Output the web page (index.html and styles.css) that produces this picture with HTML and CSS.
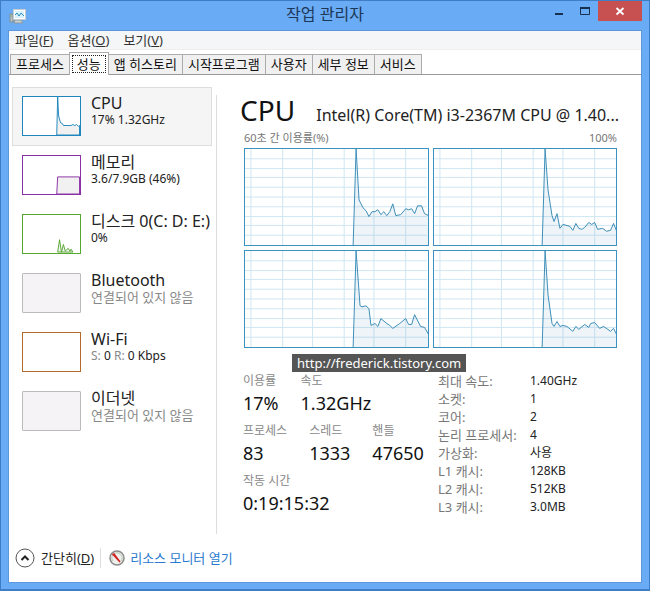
FILE: index.html
```
<!DOCTYPE html>
<html lang="ko">
<head>
  <meta charset="UTF-8">
  <meta name="viewport" content="width=device-width, initial-scale=1.0">
  <title>작업 관리자</title>
  <link rel="stylesheet" href="styles.css">
</head>
<body>
  <!-- 그래프 눈금 -->
  <svg class="defs" aria-hidden="true">
    <symbol id="grid" viewBox="0 0 184 98" preserveAspectRatio="none">
      <path class="grid-line" d="M0 10H184M0 20H184M0 29H184M0 39H184M0 49H184M0 59H184M0 69H184M0 78H184M0 88H184M6 0V98M38 0V98M68 0V98M100 0V98M130 0V98M162 0V98"/>
    </symbol>
  </svg>

  <div class="window">
    <header class="titlebar">
      <svg class="app-icon" viewBox="0 0 18 16" aria-hidden="true">
        <path d="M1 6h3v8H1z" fill="#b9c3c4" stroke="#7f8f98"/>
        <path d="M6 12h6l2 3H5z" fill="#c7d0d3" stroke="#8b999f"/>
        <rect x="4.500" y="1.500" width="12" height="10" fill="#fff" stroke="#c4ccd0"/>
        <rect x="6" y="3" width="9" height="7" fill="#d9f1fa"/>
        <path d="M6 7l2-2 2 3 2-3 3 3" fill="none" stroke="#2b8cb8"/>
        <path d="M2 8h1" stroke="#6cb33f"/>
      </svg>
      <h1>작업 관리자</h1>
      <div class="controls">
        <button class="control" aria-label="최소화"><svg viewBox="0 0 10 10"><path d="M1 8h8" stroke="#16304f" stroke-width="2"/></svg></button>
        <button class="control" aria-label="최대화"><svg viewBox="0 0 10 10"><path d="M.5 1.500h9v7h-9z" fill="none" stroke="#16304f"/><path d="M0 2h10" stroke="#16304f" stroke-width="2"/></svg></button>
        <button class="control close" aria-label="닫기"><svg viewBox="0 0 10 10"><path d="M1.500 2l7 6.500M8.500 2l-7 6.500" stroke="#fff" stroke-width="1.800"/></svg></button>
      </div>
    </header>

    <div class="client">
      <nav class="menu">
        <button>파일(<u>F</u>)</button>
        <button>옵션(<u>O</u>)</button>
        <button>보기(<u>V</u>)</button>
      </nav>
      <div class="tabs" role="tablist">
        <button class="tab" role="tab">프로세스</button>
        <button class="tab active" role="tab" aria-selected="true"><span>성능</span></button>
        <button class="tab" role="tab">앱 히스토리</button>
        <button class="tab" role="tab">시작프로그램</button>
        <button class="tab" role="tab">사용자</button>
        <button class="tab" role="tab">세부 정보</button>
        <button class="tab" role="tab">서비스</button>
      </div>

      <div class="content">
        <aside>
          <button class="item active">
            <svg class="thumb cpu" viewBox="0 0 59 40"><path d="M35 40L36 0L37 20L39 27L41 28L42 30H50L52 29L54 30L56 29L58 31L59 30V40z"/></svg>
            <span class="item-text"><span class="item-name">CPU</span><span class="item-value">17% 1.32GHz</span></span>
          </button>
          <button class="item">
            <svg class="thumb memory" viewBox="0 0 59 40"><path d="M35 40L36 22H59V40z"/></svg>
            <span class="item-text"><span class="item-name">메모리</span><span class="item-value">3.6/7.9GB (46%)</span></span>
          </button>
          <button class="item">
            <svg class="thumb disk" viewBox="0 0 59 40"><path d="M36 39L38 26L40 39L42 31L44 38L47 35L49 38L50 36L52 39H36z"/></svg>
            <span class="item-text"><span class="item-name">디스크 0(C: D: E:)</span><span class="item-value">0%</span></span>
          </button>
          <button class="item">
            <span class="thumb off"></span>
            <span class="item-text"><span class="item-name">Bluetooth</span><span class="item-value offline">연결되어 있지 않음</span></span>
          </button>
          <button class="item">
            <span class="thumb wifi"></span>
            <span class="item-text"><span class="item-name">Wi-Fi</span><span class="item-value"><span class="muted">S:</span> 0 <span class="muted">R:</span> 0 Kbps</span></span>
          </button>
          <button class="item">
            <span class="thumb off"></span>
            <span class="item-text"><span class="item-name">이더넷</span><span class="item-value offline">연결되어 있지 않음</span></span>
          </button>
        </aside>

        <main>
          <div class="heading">
            <h2>CPU</h2>
            <p>Intel(R) Core(TM) i3-2367M CPU @ 1.40...</p>
          </div>
          <div class="scale"><span>60초 간 이용률(%)</span><span>100%</span></div>
          <div class="graphs">
            <svg class="graph" viewBox="0 0 184 98" preserveAspectRatio="none">
              <use href="#grid"/>
              <path class="line" d="M109 99L112 0L115 52L119 60L122 63L125 69L128 64H131L134 62L137 67L140 64L143 68L146 64L149 56L152 68L157 67L162 61L165 62L168 61L171 66L174 58H178L181 66L185 68V99z"/>
            </svg>
            <svg class="graph" viewBox="0 0 184 98" preserveAspectRatio="none">
              <use href="#grid"/>
              <path class="line" d="M109 99L112 0L115 42L119 68L121 74L124 66L127 81L130 77L137 79L140 83L143 76L146 81L149 82L152 80L156 75L159 77L162 75L165 82L170 81L174 84L178 83L181 76L185 86V99z"/>
            </svg>
            <svg class="graph" viewBox="0 0 184 98" preserveAspectRatio="none">
              <use href="#grid"/>
              <path class="line" d="M109 99L112 0L116 56L118 57L122 56L125 59L127 76L131 74L134 77L137 69L143 74L146 76L149 79L156 74L162 69L165 75H168L171 65L177 77L181 78L185 85V99z"/>
            </svg>
            <svg class="graph" viewBox="0 0 184 98" preserveAspectRatio="none">
              <use href="#grid"/>
              <path class="line" d="M109 99L112 0L115 45L119 74L121 77L124 72L127 77L130 76L134 77L140 82L143 77L146 80L152 75L156 78L158 74L162 73L167 79L171 77L178 82L181 79L185 87V99z"/>
            </svg>
            <span class="watermark">http://frederick.tistory.com</span>
          </div>

          <div class="info">
            <div class="stats">
              <dl>
                <div><dt>이용률</dt><dd>17%</dd></div>
                <div><dt>속도</dt><dd>1.32GHz</dd></div>
              </dl>
              <dl>
                <div><dt>프로세스</dt><dd>83</dd></div>
                <div><dt>스레드</dt><dd>1333</dd></div>
                <div><dt>핸들</dt><dd>47650</dd></div>
              </dl>
              <dl>
                <div><dt>작동 시간</dt><dd>0:19:15:32</dd></div>
              </dl>
            </div>
            <table class="specs">
              <tr><th scope="row">최대 속도:</th><td>1.40GHz</td></tr>
              <tr><th scope="row">소켓:</th><td>1</td></tr>
              <tr><th scope="row">코어:</th><td>2</td></tr>
              <tr><th scope="row">논리 프로세서:</th><td>4</td></tr>
              <tr><th scope="row">가상화:</th><td>사용</td></tr>
              <tr><th scope="row">L1 캐시:</th><td>128KB</td></tr>
              <tr><th scope="row">L2 캐시:</th><td>512KB</td></tr>
              <tr><th scope="row">L3 캐시:</th><td>3.0MB</td></tr>
            </table>
          </div>
        </main>
      </div>

      <footer>
        <button class="fewer">
          <svg viewBox="0 0 20 20" aria-hidden="true"><circle cx="10" cy="10" r="9" fill="#fff" stroke="#555"/><path d="M6.500 12L10 8.500L13.500 12" fill="none" stroke="#222" stroke-width="2"/></svg>
          <span>간단히(<u>D</u>)</span>
        </button>
        <a class="monitor" href="#">
          <svg viewBox="0 0 16 16" aria-hidden="true"><circle cx="8" cy="8" r="7" fill="#eef0ec" stroke="#8b8b8b" stroke-width="1.500"/><path d="M4 11a5 5 0 1 1 8 0" fill="none" stroke="#b5cbb4"/><path d="M4 4.500L5 4L11 12z" fill="#d32626" stroke="#d32626" stroke-width="1.500"/></svg>
          <span>리소스 모니터 열기</span>
        </a>
      </footer>
    </div>
  </div>
</body>
</html>
```
FILE: styles.css
```
* { box-sizing:border-box }
html, body { margin:0;height:100% }
body { color:#222;font:13px/16px "Noto Sans", "Noto Sans CJK KR", sans-serif }
h1, h2, p, dl, dd { margin:0;font-weight:normal }
button { background:none;border:0;color:inherit;font:inherit;margin:0;padding:0;text-align:left }
svg { display:block }
.defs { height:0;position:absolute;width:0 }

.window { background-color:#6aabf5;border:1px solid #3f7dc6;border-bottom-width:2px;display:flex;flex-direction:column;min-height:100%;padding:0 7px 6px }
.titlebar { align-items:flex-start;display:grid;grid-template-columns:1fr auto 1fr;height:29px }
.app-icon { height:16px;margin:7px 0 0 1px;width:18px }
h1 { color:#1d3857;font-size:16px;line-height:26px }
.controls { display:flex;justify-content:flex-end }
.control { align-items:center;display:flex;height:20px;justify-content:center;width:26px }
.control svg { height:10px;width:10px }
.control.close { background-color:#c75050;width:44px }

.client { background-color:#fff;border:1px solid #5c97dc;display:flex;flex:1;flex-direction:column }
.menu { background-color:#f5f6f7;border-bottom:1px solid #eee;display:flex;gap:14px;height:19px;padding:0 6px }
.menu button { color:#333;line-height:18px }
.tabs { border-bottom:1px solid #999;display:flex;height:25px;padding:4px 0 0 1px }
.tab { background-color:#f0f0f0;border:1px solid #acacac;border-width:1px 1px 0 1px;color:#111;line-height:18px;margin-right:-1px;padding:0 5px 2px;white-space:nowrap }
.tab.active { background-color:#fff;height:23px;margin-top:-2px;padding:1px 2px 2px;position:relative }
.tab.active span { border:1px dotted #222;display:block;line-height:16px;padding:0 4px }

.content { display:flex;flex:1;padding:12px 24px 0 3px }
aside { flex:none;width:200px }
.item { border:1px solid transparent;display:flex;gap:10px;height:59px;padding:6px 9px;width:100% }
.item.active { background-color:#f5f5f5;border-color:#ddd }
.item-text { display:flex;flex-direction:column;white-space:nowrap }
.item-name { font-size:16px;line-height:18px }
.item-value { font-size:12px;line-height:16px }
.item-value.offline { color:#888;font-size:13px }
.thumb { background-color:#fff;border:1px solid;flex:none;height:40px;margin-top:2px;width:59px }
.thumb path { fill:#f1f1f1;stroke:currentColor }
.cpu { color:#1e86bc }
.memory { color:#8b2fa5 }
.disk { color:#55a82f }
.wifi { color:#b46a2c }
.off { background-color:#f5f3f5;border-color:#bbb;border-radius:1px }
.muted { color:#888 }

main { border-left:1px solid #ddd;flex:1;margin:8px 0 0 4px;min-width:0;padding-left:27px }
.heading { align-items:baseline;display:flex;justify-content:space-between;margin:0 -2px 0 -4px }
h2 { color:#111;font-size:28px;line-height:30px }
.heading p { font-size:16px;white-space:nowrap }
.scale { color:#777;display:flex;font-size:11px;justify-content:space-between;line-height:16px;padding-top:5px }
.graphs { display:grid;gap:4px;grid-template-columns:1fr 1fr;margin-top:2px;position:relative }
.graph { border:1px solid #3b91c0;height:98px;width:100% }
.grid-line { fill:none;stroke:#cfe6f2;vector-effect:non-scaling-stroke }
.line { fill:#5c96bd1a;stroke:#3f8fb9;vector-effect:non-scaling-stroke }
.watermark { background-color:#555;color:#fff;font-size:13px;left:48px;line-height:18px;padding:0 5px;position:absolute;top:206px }

.info { align-items:flex-start;display:flex;justify-content:space-between;padding-top:24px }
.stats { display:flex;flex-direction:column;gap:6px;margin-left:-1px }
.stats dl { display:flex;gap:22px }
dt { color:#888;font-size:12px;line-height:18px }
dd { color:#111;font-size:18px;line-height:26px }
.specs { border-collapse:collapse;flex:0 0 179px;font-size:12px;line-height:18px }
.specs th, .specs td { font-weight:normal;padding:0;text-align:left;white-space:nowrap }
.specs th { color:#777;font-size:13px;width:92px }

footer { align-items:center;display:flex;height:48px;padding:0 6px }
.fewer, .monitor { align-items:center;display:flex }
.fewer { border-right:1px solid #ddd;gap:6px;padding-right:6px }
.fewer svg { height:20px;width:20px }
.monitor { color:#2a7bd0;gap:5px;padding-left:8px;text-decoration:none }
.monitor svg { height:16px;width:16px }
```
